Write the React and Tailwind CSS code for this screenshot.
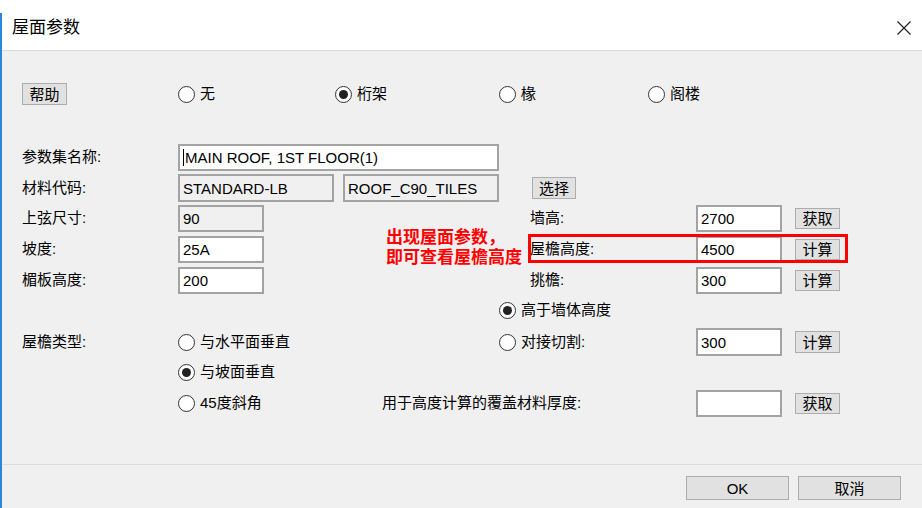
import React from 'react'

function Field({ w, h = 'h-[27px]', value, disabled, caret }) {
  return (
    <div
      className={`${w} ${h} shrink-0 border-2 border-[#a3a3a3] ${
        disabled ? 'bg-[#f0f0f0]' : 'bg-white'
      } flex items-center pl-[3px] text-[15px] leading-none`}
    >
      {caret && <span className="w-px h-[17px] bg-black mr-px" />}
      {value}
    </div>
  )
}

function Btn({ w, h, children }) {
  return (
    <button
      type="button"
      className={`${w} ${h} shrink-0 bg-[#e1e1e1] border border-[#adadad] text-[15px] leading-none flex items-center justify-center`}
    >
      {children}
    </button>
  )
}

function Radio({ checked, label }) {
  return (
    <div className="flex items-center gap-[5px] text-[15px]">
      <span className="w-[17px] h-[17px] rounded-full border-[1.5px] border-[#333] bg-white flex items-center justify-center">
        {checked && <span className="w-[9px] h-[9px] rounded-full bg-[#222]" />}
      </span>
      <span>{label}</span>
    </div>
  )
}

function Label({ w = 'w-[156px]', children }) {
  return <div className={`${w} shrink-0 text-[15px]`}>{children}</div>
}

// rows 上弦尺寸 / 坡度 / 楣板高度 share the right-hand column
function SplitRow({ mt, left, leftValue, leftDisabled, right, rightValue, action }) {
  return (
    <div className={`${mt} h-[27px] flex items-center pl-[22px]`}>
      <Label>{left}</Label>
      <Field w="w-[86px]" value={leftValue} disabled={leftDisabled} />
      <div className="w-[266px] shrink-0" />
      <Label w="w-[166px]">{right}</Label>
      <Field w="w-[86px]" value={rightValue} />
      <div className="ml-[13px]">
        <Btn w="w-[45px]" h="h-[21px]">{action}</Btn>
      </div>
    </div>
  )
}

export default function App() {
  return (
    <div className="relative w-[922px] h-[508px] overflow-hidden flex flex-col bg-[#f0f0f0] text-black font-['Liberation_Sans','Noto_Sans_CJK_SC',sans-serif]">
      <div className="h-[51px] shrink-0 bg-white border-b border-[#dadada] flex items-center justify-between pl-[12px] pr-[11px] pt-[6px]">
        <span className="text-[17px]">屋面参数</span>
        <svg width="14" height="14" viewBox="0 0 14 14">
          <path d="M0.5 0.5L13.5 13.5M13.5 0.5L0.5 13.5" stroke="#222" strokeWidth="1.2" />
        </svg>
      </div>

      <div className="flex-1 flex flex-col">
        <div className="mt-[32px] h-[22px] flex items-center pl-[22px]">
          <Btn w="w-[45px]" h="h-[22px]">帮助</Btn>
          <div className="ml-[111px] w-[157px]">
            <Radio label="无" />
          </div>
          <div className="w-[164px]">
            <Radio checked label="桁架" />
          </div>
          <div className="w-[149px]">
            <Radio label="椽" />
          </div>
          <Radio label="阁楼" />
        </div>

        <div className="mt-[39px] h-[27px] flex items-center pl-[22px]">
          <Label>参数集名称:</Label>
          <Field w="w-[321px]" caret value="MAIN ROOF, 1ST FLOOR(1)" />
        </div>

        <div className="mt-[3px] h-[28px] flex items-center pl-[22px]">
          <Label>材料代码:</Label>
          <Field w="w-[156px]" h="h-[28px]" disabled value="STANDARD-LB" />
          <div className="ml-[9px]">
            <Field w="w-[156px]" h="h-[28px]" disabled value="ROOF_C90_TILES" />
          </div>
          <div className="ml-[33px]">
            <Btn w="w-[44px]" h="h-[22px]">选择</Btn>
          </div>
        </div>

        <SplitRow mt="mt-[3px]" left="上弦尺寸:" leftValue="90" leftDisabled right="墙高:" rightValue="2700" action="获取" />
        <SplitRow mt="mt-[4px]" left="坡度:" leftValue="25A" right="屋檐高度:" rightValue="4500" action="计算" />
        <SplitRow mt="mt-[4px]" left="楣板高度:" leftValue="200" right="挑檐:" rightValue="300" action="计算" />

        <div className="mt-[6px] h-[20px] flex items-center pl-[499px]">
          <Radio checked label="高于墙体高度" />
        </div>

        <div className="mt-[8px] h-[28px] flex items-center pl-[22px]">
          <Label>屋檐类型:</Label>
          <div className="w-[321px] shrink-0">
            <Radio label="与水平面垂直" />
          </div>
          <div className="w-[197px] shrink-0">
            <Radio label="对接切割:" />
          </div>
          <Field w="w-[86px]" h="h-[28px]" value="300" />
          <div className="ml-[13px]">
            <Btn w="w-[45px]" h="h-[22px]">计算</Btn>
          </div>
        </div>

        <div className="mt-[6px] h-[20px] flex items-center pl-[178px]">
          <Radio checked label="与坡面垂直" />
        </div>

        <div className="mt-[8px] h-[27px] flex items-center pl-[178px]">
          <div className="w-[204px] shrink-0">
            <Radio label="45度斜角" />
          </div>
          <Label w="w-[314px]">用于高度计算的覆盖材料厚度:</Label>
          <Field w="w-[86px]" value="" />
          <div className="ml-[13px]">
            <Btn w="w-[45px]" h="h-[21px]">获取</Btn>
          </div>
        </div>
      </div>

      <div className="h-[44px] shrink-0 border-t border-[#dcdcdc] flex items-start justify-end gap-[9px] pt-[11px] pr-[21px]">
        <Btn w="w-[103px]" h="h-[24px]">OK</Btn>
        <Btn w="w-[103px]" h="h-[24px]">取消</Btn>
      </div>

      {/* annotation overlay */}
      <div className="absolute left-[386px] top-[228px] text-[17px] leading-[20px] font-bold text-[#ff0000]">
        <div>出现屋面参数，</div>
        <div>即可查看屋檐高度</div>
      </div>
      <div className="absolute left-[528px] top-[234px] w-[320px] h-[29px] border-[3px] border-[#ff0000]" />

      <div className="absolute left-0 top-[13px] bottom-0 w-[2px] bg-[#2b87d8]" />
    </div>
  )
}
